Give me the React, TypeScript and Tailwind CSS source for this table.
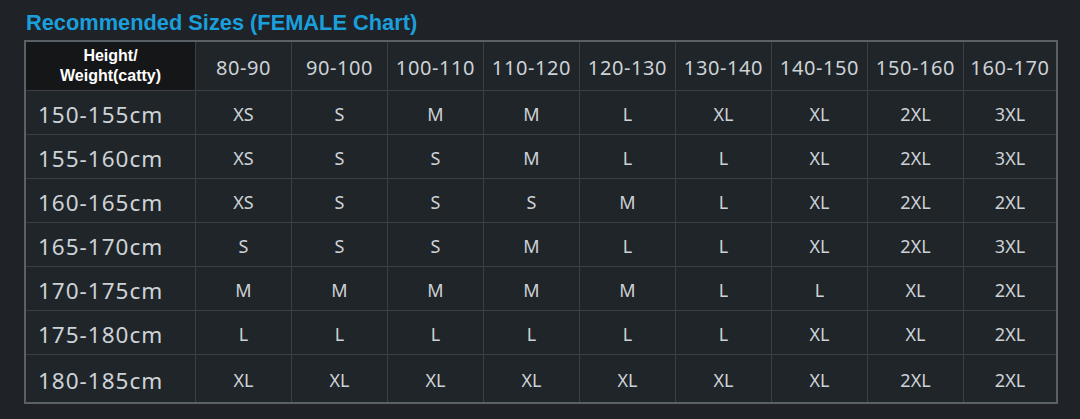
const COLS = ['80-90', '90-100', '100-110', '110-120', '120-130', '130-140', '140-150', '150-160', '160-170'];

const ROWS: { label: string; sizes: string[] }[] = [
  { label: '150-155cm', sizes: ['XS', 'S', 'M', 'M', 'L', 'XL', 'XL', '2XL', '3XL'] },
  { label: '155-160cm', sizes: ['XS', 'S', 'S', 'M', 'L', 'L', 'XL', '2XL', '3XL'] },
  { label: '160-165cm', sizes: ['XS', 'S', 'S', 'S', 'M', 'L', 'XL', '2XL', '2XL'] },
  { label: '165-170cm', sizes: ['S', 'S', 'S', 'M', 'L', 'L', 'XL', '2XL', '3XL'] },
  { label: '170-175cm', sizes: ['M', 'M', 'M', 'M', 'M', 'L', 'L', 'XL', '2XL'] },
  { label: '175-180cm', sizes: ['L', 'L', 'L', 'L', 'L', 'L', 'XL', 'XL', '2XL'] },
  { label: '180-185cm', sizes: ['XL', 'XL', 'XL', 'XL', 'XL', 'XL', 'XL', '2XL', '2XL'] },
];

export default function App() {
  return (
    <div className="w-[1080px] h-[419px] bg-[#1f2327] pl-[24px] pt-[10px] overflow-hidden">
      <h1 className="ml-[2px] text-[21.8px] leading-[25px] font-bold text-[#1b9fdc] font-['Liberation_Sans',Arial,sans-serif]">
        Recommended Sizes (FEMALE Chart)
      </h1>

      {/* Table */}
      <div className="mt-[5px] w-[1034px] border-2 border-[#596066] bg-[#3a4046] grid grid-cols-[169px_repeat(8,95px)_92px] grid-rows-[48px_repeat(6,43px)_47px] gap-px font-['Noto_Sans',sans-serif] text-[#cdd2d6]">
        <div className="bg-[#151617] flex flex-col items-center justify-center text-white font-bold text-[16px] leading-[20px] font-['Liberation_Sans',Arial,sans-serif]">
          <span>Height/</span>
          <span>Weight(catty)</span>
        </div>
        {COLS.map((c) => (
          <div key={c} className="bg-[#202529] flex items-center justify-center pt-[4px] text-[20px] tracking-[0.6px]">
            {c}
          </div>
        ))}

        {ROWS.map((r) => (
          <Row key={r.label} label={r.label} sizes={r.sizes} />
        ))}
      </div>
    </div>
  );
}

function Row({ label, sizes }: { label: string; sizes: string[] }) {
  return (
    <>
      <div className="bg-[#202529] flex items-center pl-[12px] pt-[4px] text-[22.5px] tracking-[1px]">
        {label}
      </div>
      {sizes.map((s, i) => (
        <div key={i} className="bg-[#202529] flex items-center justify-center pt-[3px] text-[18px]">
          {s}
        </div>
      ))}
    </>
  );
}
